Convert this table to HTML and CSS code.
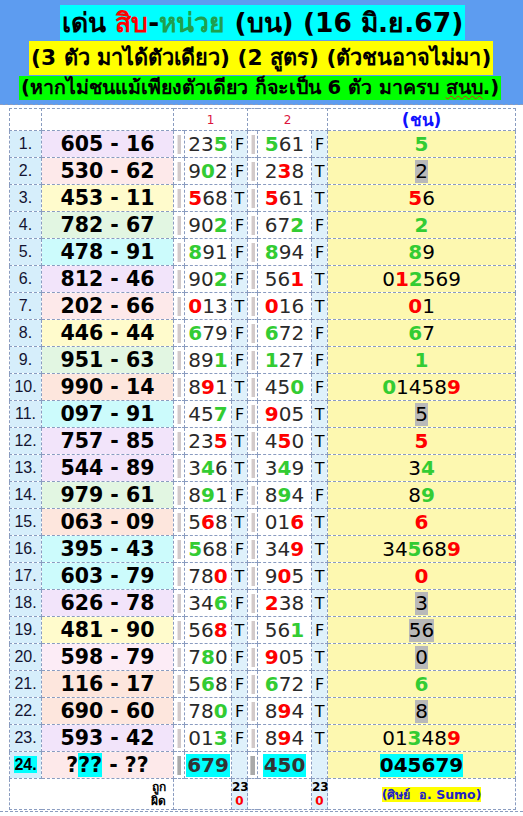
FILE: index.html
```html
<!DOCTYPE html>
<html lang="th">
<head>
<meta charset="utf-8">
<title>เด่น สิบ-หน่วย</title>
<link rel="stylesheet" href="styles.css">
</head>
<body>
<div class="page">
  <header class="banner">
    <div class="line l1">เด่น <span class="red">สิบ</span>-<span class="dgreen">หน่วย</span> (บน) (16 มิ.ย.67)</div>
    <div class="line l2">(3 ตัว มาได้ตัวเดียว) (2 สูตร) (ตัวชนอาจไม่มา)</div>
    <div class="line l3">(หากไม่ชนแม้เพียงตัวเดียว ก็จะเป็น 6 ตัว มาครบ <span class="squig">สนบ</span>.)</div>
  </header>
  <table class="grid">
    <colgroup>
      <col class="c-no"><col class="c-pair"><col class="c-bar1"><col class="c-n1"><col class="c-tf"><col class="c-bar2"><col class="c-n2"><col class="c-tf"><col class="c-chon">
    </colgroup>
    <thead>
      <tr class="hdr"><th></th><th></th><th colspan="3" class="hnum">1</th><th colspan="3" class="hnum">2</th><th class="hchon">(ชน)</th></tr>
    </thead>
    <tbody>
      <tr><td class="no">1.</td><td class="pair lav">605 - 16</td><td class="bar"><i></i></td><td class="n">23<b class="g">5</b></td><td class="tf">F</td><td class="bar"><i></i></td><td class="n"><b class="g">5</b>61</td><td class="tf">F</td><td class="chon"><b class="g">5</b></td></tr>
      <tr><td class="no">2.</td><td class="pair pink">530 - 62</td><td class="bar"><i></i></td><td class="n">9<b class="g">0</b>2</td><td class="tf">F</td><td class="bar"><i></i></td><td class="n">2<b class="r">3</b>8</td><td class="tf">T</td><td class="chon"><span class="hl">2</span></td></tr>
      <tr><td class="no">3.</td><td class="pair yel">453 - 11</td><td class="bar"><i></i></td><td class="n"><b class="r">5</b>68</td><td class="tf">T</td><td class="bar"><i></i></td><td class="n"><b class="r">5</b>61</td><td class="tf">T</td><td class="chon"><b class="r">5</b>6</td></tr>
      <tr><td class="no">4.</td><td class="pair grn">782 - 67</td><td class="bar"><i></i></td><td class="n">90<b class="g">2</b></td><td class="tf">F</td><td class="bar"><i></i></td><td class="n">67<b class="g">2</b></td><td class="tf">F</td><td class="chon"><b class="g">2</b></td></tr>
      <tr><td class="no">5.</td><td class="pair cyan">478 - 91</td><td class="bar"><i></i></td><td class="n"><b class="g">8</b>91</td><td class="tf">F</td><td class="bar"><i></i></td><td class="n"><b class="g">8</b>94</td><td class="tf">F</td><td class="chon"><b class="g">8</b>9</td></tr>
      <tr><td class="no">6.</td><td class="pair lav">812 - 46</td><td class="bar"><i></i></td><td class="n">90<b class="g">2</b></td><td class="tf">F</td><td class="bar"><i></i></td><td class="n">56<b class="r">1</b></td><td class="tf">T</td><td class="chon">0<b class="r">1</b><b class="g">2</b>569</td></tr>
      <tr><td class="no">7.</td><td class="pair pink">202 - 66</td><td class="bar"><i></i></td><td class="n"><b class="r">0</b>13</td><td class="tf">T</td><td class="bar"><i></i></td><td class="n"><b class="r">0</b>16</td><td class="tf">T</td><td class="chon"><b class="r">0</b>1</td></tr>
      <tr><td class="no">8.</td><td class="pair yel">446 - 44</td><td class="bar"><i></i></td><td class="n"><b class="g">6</b>79</td><td class="tf">F</td><td class="bar"><i></i></td><td class="n"><b class="g">6</b>72</td><td class="tf">F</td><td class="chon"><b class="g">6</b>7</td></tr>
      <tr><td class="no">9.</td><td class="pair grn">951 - 63</td><td class="bar"><i></i></td><td class="n">89<b class="g">1</b></td><td class="tf">F</td><td class="bar"><i></i></td><td class="n"><b class="g">1</b>27</td><td class="tf">F</td><td class="chon"><b class="g">1</b></td></tr>
      <tr><td class="no">10.</td><td class="pair peach">990 - 14</td><td class="bar"><i></i></td><td class="n">8<b class="r">9</b>1</td><td class="tf">T</td><td class="bar"><i></i></td><td class="n">45<b class="g">0</b></td><td class="tf">F</td><td class="chon"><b class="g">0</b>1458<b class="r">9</b></td></tr>
      <tr><td class="no">11.</td><td class="pair cyan">097 - 91</td><td class="bar"><i></i></td><td class="n">45<b class="g">7</b></td><td class="tf">F</td><td class="bar"><i></i></td><td class="n"><b class="r">9</b>05</td><td class="tf">T</td><td class="chon"><span class="hl">5</span></td></tr>
      <tr><td class="no">12.</td><td class="pair lav">757 - 85</td><td class="bar"><i></i></td><td class="n">23<b class="r">5</b></td><td class="tf">T</td><td class="bar"><i></i></td><td class="n">4<b class="r">5</b>0</td><td class="tf">T</td><td class="chon"><b class="r">5</b></td></tr>
      <tr><td class="no">13.</td><td class="pair lav">544 - 89</td><td class="bar"><i></i></td><td class="n">3<b class="g">4</b>6</td><td class="tf">T</td><td class="bar"><i></i></td><td class="n">3<b class="g">4</b>9</td><td class="tf">T</td><td class="chon">3<b class="g">4</b></td></tr>
      <tr><td class="no">14.</td><td class="pair grn">979 - 61</td><td class="bar"><i></i></td><td class="n">8<b class="g">9</b>1</td><td class="tf">F</td><td class="bar"><i></i></td><td class="n">8<b class="g">9</b>4</td><td class="tf">F</td><td class="chon">8<b class="g">9</b></td></tr>
      <tr><td class="no">15.</td><td class="pair peach">063 - 09</td><td class="bar"><i></i></td><td class="n">5<b class="r">6</b>8</td><td class="tf">T</td><td class="bar"><i></i></td><td class="n">01<b class="r">6</b></td><td class="tf">T</td><td class="chon"><b class="r">6</b></td></tr>
      <tr><td class="no">16.</td><td class="pair cyan">395 - 43</td><td class="bar"><i></i></td><td class="n"><b class="g">5</b>68</td><td class="tf">F</td><td class="bar"><i></i></td><td class="n">34<b class="r">9</b></td><td class="tf">T</td><td class="chon">34<b class="g">5</b>68<b class="r">9</b></td></tr>
      <tr><td class="no">17.</td><td class="pair cyan">603 - 79</td><td class="bar"><i></i></td><td class="n">78<b class="r">0</b></td><td class="tf">T</td><td class="bar"><i></i></td><td class="n">9<b class="r">0</b>5</td><td class="tf">T</td><td class="chon"><b class="r">0</b></td></tr>
      <tr><td class="no">18.</td><td class="pair lav">626 - 78</td><td class="bar"><i></i></td><td class="n">34<b class="g">6</b></td><td class="tf">F</td><td class="bar"><i></i></td><td class="n"><b class="r">2</b>38</td><td class="tf">T</td><td class="chon"><span class="hl">3</span></td></tr>
      <tr><td class="no">19.</td><td class="pair yel">481 - 90</td><td class="bar"><i></i></td><td class="n">56<b class="r">8</b></td><td class="tf">T</td><td class="bar"><i></i></td><td class="n">56<b class="g">1</b></td><td class="tf">F</td><td class="chon"><span class="hl">56</span></td></tr>
      <tr><td class="no">20.</td><td class="pair lpink">598 - 79</td><td class="bar"><i></i></td><td class="n">7<b class="g">8</b>0</td><td class="tf">F</td><td class="bar"><i></i></td><td class="n"><b class="r">9</b>05</td><td class="tf">T</td><td class="chon"><span class="hl">0</span></td></tr>
      <tr><td class="no">21.</td><td class="pair peach">116 - 17</td><td class="bar"><i></i></td><td class="n">5<b class="g">6</b>8</td><td class="tf">F</td><td class="bar"><i></i></td><td class="n"><b class="g">6</b>72</td><td class="tf">F</td><td class="chon"><b class="g">6</b></td></tr>
      <tr><td class="no">22.</td><td class="pair peach">690 - 60</td><td class="bar"><i></i></td><td class="n">78<b class="g">0</b></td><td class="tf">F</td><td class="bar"><i></i></td><td class="n">8<b class="r">9</b>4</td><td class="tf">T</td><td class="chon"><span class="hl">8</span></td></tr>
      <tr><td class="no">23.</td><td class="pair lav">593 - 42</td><td class="bar"><i></i></td><td class="n">01<b class="g">3</b></td><td class="tf">F</td><td class="bar"><i></i></td><td class="n">8<b class="r">9</b>4</td><td class="tf">T</td><td class="chon">01<b class="g">3</b>48<b class="r">9</b></td></tr>
      <tr class="last"><td class="no"><span class="cy">24.</span></td><td class="pair pink">?<span class="cy">??</span> - ??</td><td class="bar"><i class="dark"></i></td><td class="n"><span class="cyb">679</span></td><td class="tf"></td><td class="bar"><i class="dark wide"></i></td><td class="n"><span class="cyb">450</span></td><td class="tf"></td><td class="chon"><span class="cyb blk">045679</span></td></tr>
    </tbody>
    <tfoot>
      <tr class="foot">
        <td colspan="2" class="lbl">ถูก<br>ผิด</td>
        <td colspan="2"></td>
        <td class="tf cnt">23<br><span class="zero">0</span></td>
        <td colspan="2"></td>
        <td class="tf cnt">23<br><span class="zero">0</span></td>
        <td class="credit"><span class="tag">(ศิษย์&nbsp; อ. Sumo)</span></td>
      </tr>
    </tfoot>
  </table>
</div>
</body>
</html>
```

FILE: styles.css
```css
html, body {
  margin: 0;
  padding: 0;
}

body {
  background: #ffffff;
  font-family: "DejaVu Sans", "Noto Sans", sans-serif;
  color: #000;
}

.page {
  width: 523px;
  padding-bottom: 1px;
  border-bottom: 1px dashed #8a9cc0;
}

.banner {
  background: #5d9cf0;
  height: 105px;
  box-sizing: border-box;
  padding-top: 5px;
  border-bottom: 1px dashed #8a9cc0;
}

.line {
  display: table;
  font-weight: bold;
  color: #000;
  white-space: nowrap;
  text-align: center;
}

.l1 {
  background: #00ffff;
  font-size: 26.5px;
  line-height: 35px;
  padding: 0 2px;
  margin: 0 0 0 60px;
}

.l2 {
  background: #ffff00;
  margin: 1px 0 0 29px;
  font-size: 21.7px;
  line-height: 34px;
  padding: 0 2px;
}

.l3 {
  background: #00ff00;
  margin: 1px 0 0 19px;
  font-size: 19.6px;
  line-height: 24px;
  padding: 0 2px;
}

.red { color: #ff0000; }
.dgreen { color: #1f9f4f; }

.squig {
  text-decoration: underline wavy #e02020;
  text-decoration-thickness: 1px;
}

.grid {
  border-collapse: collapse;
  table-layout: fixed;
  width: 506px;
  margin: 3px 0 0 9px;
}

.c-no { width: 32px; }
.c-pair { width: 132px; }
.c-bar1 { width: 11px; }
.c-n1 { width: 47px; }
.c-tf { width: 16px; }
.c-bar2 { width: 10px; }
.c-n2 { width: 54px; }
.c-chon { width: 188px; }

.grid td, .grid th {
  border: 1px dashed #8a9cc0;
  padding: 0;
  height: 26px;
  text-align: center;
  vertical-align: middle;
  white-space: nowrap;
  overflow: hidden;
}

.grid .hdr th {
  height: 21px;
  line-height: 18px;
  background: #fff;
  font-weight: normal;
}

.hnum {
  color: #dc143c;
  font-family: "DejaVu Sans", sans-serif;
  font-size: 12px;
}

.grid .hdr .hchon {
  color: #1010ff;
  font-weight: bold;
  font-size: 17px;
}

.no {
  background: #d6eefb;
  font-family: "Liberation Sans", sans-serif;
  font-size: 16px;
  color: #141432;
}

.pair {
  font-weight: bold;
  font-size: 20.5px;
  color: #000;
}

.lav { background: #f2e4fa; }
.pink { background: #fde9ea; }
.yel { background: #fffbcc; }
.grn { background: #e2f6e2; }
.cyan { background: #ccfbfc; }
.peach { background: #fde6dd; }
.lpink { background: #fcecf6; }

.bar {
  background: #fff;
  text-align: center;
}

.bar i {
  display: inline-block;
  width: 3px;
  height: 19px;
  vertical-align: middle;
  background: #d2caca;
  border-left: 1px solid #ebe6e6;
}

.bar i.dark {
  background: #a9a9a9;
  border-left-color: #c8c8c8;
}

.bar i.wide {
  width: 4px;
}

.n {
  background: #fff;
  font-size: 20px;
  color: #2a2a2a;
}

.n b, .chon b {
  font-weight: bold;
}

.g { color: #33cc33; }
.r { color: #ff0000; }

.tf {
  background: #dff1fb;
  font-size: 16px;
  color: #000;
}

.chon {
  background: #fdf8b0;
  font-size: 20px;
  color: #000;
}

.hl {
  background: #b9b9b9;
  display: inline-block;
  line-height: 23px;
}

.cy {
  background: #00ffff;
}

.cyb {
  background: #00ffff;
  font-weight: bold;
  color: #333;
  display: inline-block;
  line-height: 23px;
  padding: 0 1px;
}

.cyb.blk {
  color: #000;
  padding: 0;
}

.last .no {
  font-weight: bold;
  color: #000;
}

.foot td {
  height: 30px;
  background: #fff;
  vertical-align: middle;
}

.foot .lbl {
  text-align: right;
  padding-right: 7px;
  font-size: 12px;
  font-weight: bold;
  line-height: 14px;
}

.foot .cnt {
  background: #dff1fb;
  font-size: 12px;
  font-weight: bold;
  line-height: 14px;
  overflow: visible;
}

.zero {
  color: #ff0000;
}

.grid .credit {
  text-align: center;
  padding-left: 20px;
}

.tag {
  background: #ffff00;
  color: #2020c8;
  font-weight: bold;
  font-size: 12.5px;
}
```
